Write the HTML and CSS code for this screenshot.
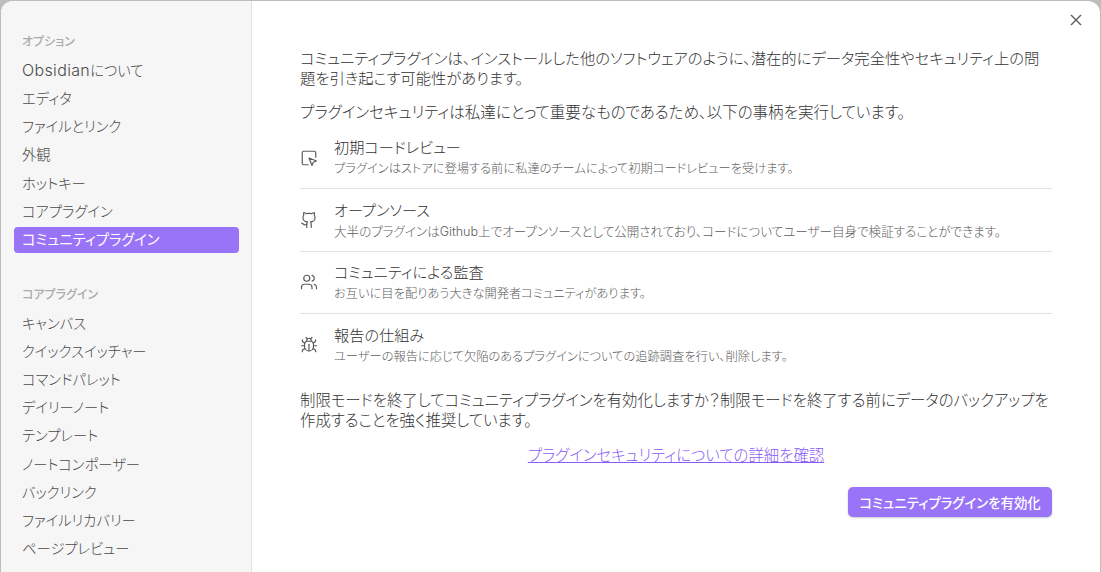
FILE: index.html
```html
<!DOCTYPE html>
<html lang="ja">
<head>
<meta charset="utf-8">
<title>設定</title>
<link rel="stylesheet" href="styles.css">
</head>
<body>
<div class="modal">
  <nav class="sidebar">
    <div class="group-title">オプション</div>
    <div class="nav-item"><span class="latin">Obsidian</span>について</div>
    <div class="nav-item">エディタ</div>
    <div class="nav-item">ファイルとリンク</div>
    <div class="nav-item">外観</div>
    <div class="nav-item">ホットキー</div>
    <div class="nav-item">コアプラグイン</div>
    <div class="nav-item active">コミュニティプラグイン</div>
    <div class="group-title second">コアプラグイン</div>
    <div class="nav-item">キャンバス</div>
    <div class="nav-item">クイックスイッチャー</div>
    <div class="nav-item">コマンドパレット</div>
    <div class="nav-item">デイリーノート</div>
    <div class="nav-item">テンプレート</div>
    <div class="nav-item">ノートコンポーザー</div>
    <div class="nav-item">バックリンク</div>
    <div class="nav-item">ファイルリカバリー</div>
    <div class="nav-item">ページプレビュー</div>
  </nav>
  <main class="content">
    <button class="close" aria-label="閉じる">
      <svg width="14" height="14" viewBox="0 0 14 14"><path d="M2 2l10 10M12 2L2 12"/></svg>
    </button>
    <p class="para first">コミュニティプラグインは、インストールした他のソフトウェアのように、潜在的にデータ完全性やセキュリティ上の問題を引き起こす可能性があります。</p>
    <p class="para second">プラグインセキュリティは私達にとって重要なものであるため、以下の事柄を実行しています。</p>
    <ul class="features">
      <li class="feature">
        <svg class="icon" viewBox="0 0 24 24"><path d="M21 11V5a2 2 0 0 0-2-2H5a2 2 0 0 0-2 2v14a2 2 0 0 0 2 2h6"/><path d="m12 12 4 10 1.7-4.3L22 16Z"/></svg>
        <div><div class="f-title">初期コードレビュー</div><div class="f-desc">プラグインはストアに登場する前に私達のチームによって初期コードレビューを受けます。</div></div>
      </li>
      <li class="feature">
        <svg class="icon" viewBox="0 0 24 24"><path d="M15 22v-4a4.8 4.8 0 0 0-1-3.5c3 0 6-2 6-5.5.08-1.25-.27-2.48-1-3.5.28-1.15.28-2.35 0-3.5 0 0-1 0-3 1.5-2.64-.5-5.36-.5-8 0C6 2 5 2 5 2c-.3 1.15-.3 2.35 0 3.5A5.403 5.403 0 0 0 4 9c0 3.5 3 5.5 6 5.5-.39.49-.68 1.05-.85 1.65-.17.6-.22 1.23-.15 1.85v4"/><path d="M9 18c-4.51 2-5-2-7-2"/></svg>
        <div><div class="f-title">オープンソース</div><div class="f-desc wide">大半のプラグインはGithub上でオープンソースとして公開されており、コードについてユーザー自身で検証することができます。</div></div>
      </li>
      <li class="feature">
        <svg class="icon" viewBox="0 0 24 24"><path d="M16 21v-2a4 4 0 0 0-4-4H6a4 4 0 0 0-4 4v2"/><circle cx="9" cy="7" r="4"/><path d="M22 21v-2a4 4 0 0 0-3-3.87"/><path d="M16 3.13a4 4 0 0 1 0 7.75"/></svg>
        <div><div class="f-title">コミュニティによる監査</div><div class="f-desc">お互いに目を配りあう大きな開発者コミュニティがあります。</div></div>
      </li>
      <li class="feature">
        <svg class="icon" viewBox="0 0 24 24"><path d="m8 2 1.88 1.88"/><path d="M14.12 3.88 16 2"/><path d="M9 7.13v-1a3.003 3.003 0 1 1 6 0v1"/><path d="M12 20c-3.3 0-6-2.7-6-6v-3a4 4 0 0 1 4-4h4a4 4 0 0 1 4 4v3c0 3.3-2.7 6-6 6"/><path d="M12 20v-9"/><path d="M6.53 9C4.6 8.8 3 7.1 3 5"/><path d="M6 13H2"/><path d="M3 21c0-2.1 1.7-3.9 3.8-4"/><path d="M20.97 5c0 2.1-1.6 3.8-3.5 4"/><path d="M22 13h-4"/><path d="M17.2 17c2.1.1 3.8 1.9 3.8 4"/></svg>
        <div><div class="f-title">報告の仕組み</div><div class="f-desc">ユーザーの報告に応じて欠陥のあるプラグインについての追跡調査を行い、削除します。</div></div>
      </li>
    </ul>
    <p class="para warn">制限モードを終了してコミュニティプラグインを有効化しますか？制限モードを終了する前にデータのバックアップを作成することを強く推奨しています。</p>
    <div class="link-row"><a class="link" href="#">プラグインセキュリティについての詳細を確認</a></div>
    <div class="actions"><button class="cta">コミュニティプラグインを有効化</button></div>
  </main>
</div>
</body>
</html>
```
FILE: styles.css
```css
* { box-sizing: border-box; }
html, body { height: 100%; }
body {
  margin: 0;
  overflow: hidden;
  background: #bdbdbd;
  padding: 1px 1px 0 1px;
  font-family: Inter, "Noto Sans CJK JP", sans-serif;
  font-feature-settings: "palt";
  font-weight: 300;
  color: #333;
}
.modal {
  display: flex;
  height: 580px;
  background: #fff;
  border-radius: 12px 12px 0 0;
  overflow: hidden;
}
.sidebar {
  flex: 0 0 251px;
  background: #f6f6f6;
  border-right: 1px solid #e0e0e0;
  padding: 33px 12px 0 13px;
}
.group-title {
  height: 16px;
  line-height: 16px;
  margin: 0 0 8px 8px;
  font-size: 12px;
  font-weight: 500;
  color: #ababab;
}
.group-title.second { margin-top: 34px; margin-bottom: 8px; }
.nav-item {
  height: 26px;
  line-height: 26px;
  margin-bottom: 2.15px;
  padding-left: 8px;
  font-size: 14.3px;
  color: #4a4a4a;
  border-radius: 4px;
  white-space: nowrap;
}
.latin { font-size: 16px; line-height: 1; letter-spacing: .35px; }
.nav-item.active { background: #9a74f8; color: #fff; font-weight: 400; }
.content {
  position: relative;
  flex: 1;
  padding: 48px 48px 0 48px;
  min-width: 0;
}
.close {
  position: absolute;
  top: 12px;
  right: 17px;
  width: 14px;
  height: 14px;
  padding: 0;
  border: 0;
  background: none;
  display: flex;
}
.close path { fill: none; stroke: #5c5c5c; stroke-width: 1.4; }
.para {
  margin: 0;
  font-size: 15.4px;
  line-height: 20px;
  color: #333;
}
.para.first { margin-bottom: 14px; font-size: 15.34px; }
.para.second { font-size: 15.5px; }
.features { list-style: none; margin: 4px 0 0; padding: 0; }
.feature {
  display: flex;
  align-items: center;
  gap: 16px;
  height: 62.4px;
  border-bottom: 1px solid #e3e3e3;
}
.feature:last-child { border-bottom: 0; }
.icon {
  flex: 0 0 18px;
  width: 18px;
  height: 18px;
  margin-top: 0;
  fill: none;
  stroke: #5c5c5c;
  stroke-width: 1.6;
  stroke-linecap: round;
  stroke-linejoin: round;
}
.f-title { font-size: 15.2px; line-height: 20px; color: #333; }
.f-desc { font-size: 12.25px; line-height: 16px; margin-top: 3px; color: #5c5c5c; }
.f-desc.wide { font-size: 12.55px; }
.warn { margin-top: 14px; }
.link-row { text-align: center; margin-top: 14px; }
.link { font-size: 15.4px; line-height: 20px; color: #8a5cf5; text-decoration: underline; }
.actions { display: flex; justify-content: flex-end; margin-top: 21px; }
.cta {
  height: 30px;
  width: 204px;
  padding: 0;
  border: 0;
  border-radius: 5px;
  background: #9a74f8;
  color: #fff;
  font: inherit;
  font-feature-settings: "palt";
  font-size: 13.4px;
  font-weight: 500;
  box-shadow: 0 1px 2px rgba(0,0,0,.2);
}
```
